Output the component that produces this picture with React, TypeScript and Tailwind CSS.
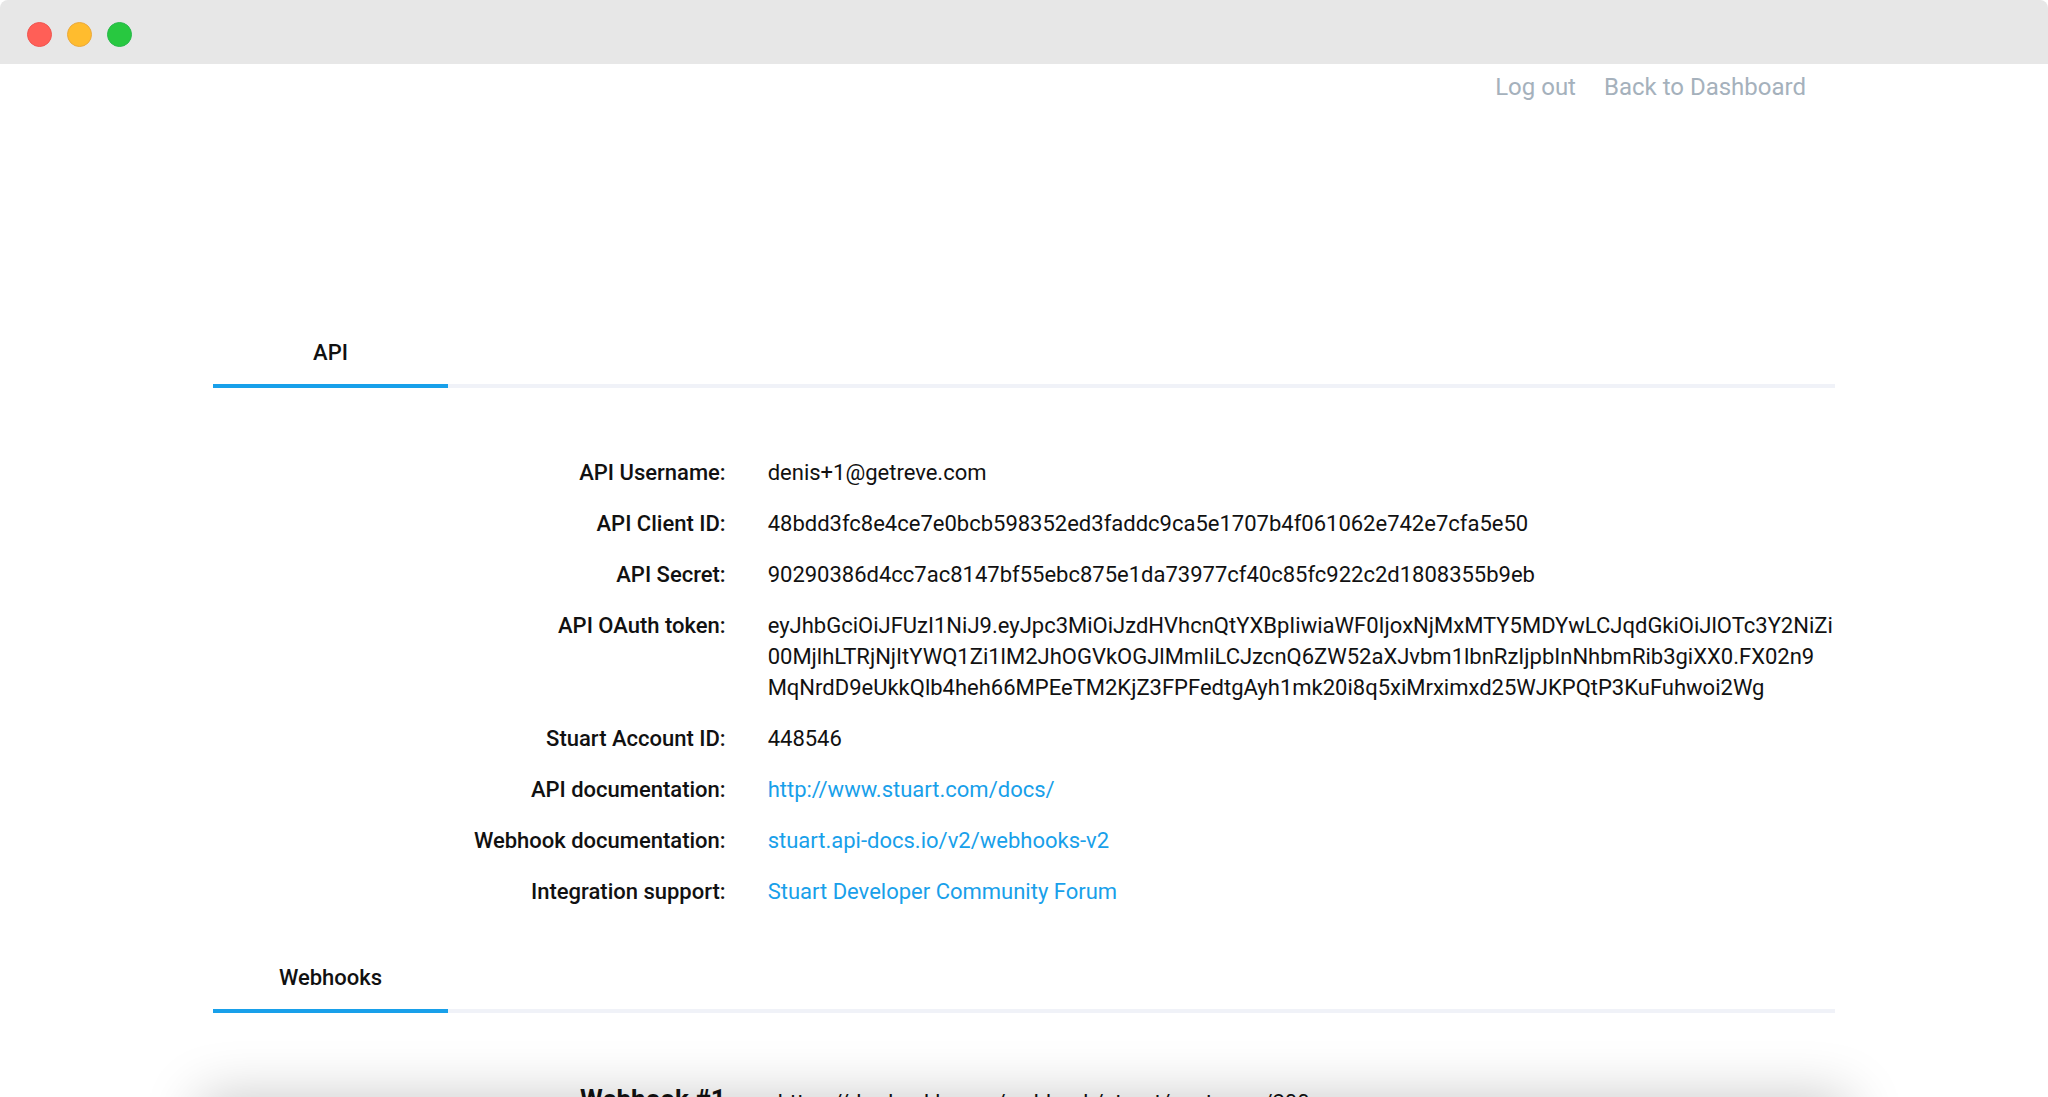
const details = [
  { label: "API Username:", lines: ["denis+1@getreve.com"] },
  { label: "API Client ID:", lines: ["48bdd3fc8e4ce7e0bcb598352ed3faddc9ca5e1707b4f061062e742e7cfa5e50"] },
  { label: "API Secret:", lines: ["90290386d4cc7ac8147bf55ebc875e1da73977cf40c85fc922c2d1808355b9eb"] },
  {
    label: "API OAuth token:",
    lines: [
      "eyJhbGciOiJFUzI1NiJ9.eyJpc3MiOiJzdHVhcnQtYXBpIiwiaWF0IjoxNjMxMTY5MDYwLCJqdGkiOiJlOTc3Y2NiZi",
      "00MjlhLTRjNjItYWQ1Zi1lM2JhOGVkOGJlMmIiLCJzcnQ6ZW52aXJvbm1lbnRzIjpbInNhbmRib3giXX0.FX02n9",
      "MqNrdD9eUkkQlb4heh66MPEeTM2KjZ3FPFedtgAyh1mk20i8q5xiMrximxd25WJKPQtP3KuFuhwoi2Wg",
    ],
  },
  { label: "Stuart Account ID:", lines: ["448546"] },
  { label: "API documentation:", lines: ["http://www.stuart.com/docs/"], href: "http://www.stuart.com/docs/" },
  { label: "Webhook documentation:", lines: ["stuart.api-docs.io/v2/webhooks-v2"], href: "https://stuart.api-docs.io/v2/webhooks-v2" },
  { label: "Integration support:", lines: ["Stuart Developer Community Forum"], href: "#forum" },
];

function SectionTab({ title }: { title: string }) {
  return (
    <div className="flex border-b-4 border-[#f0f2f8]">
      <h2 className="-mb-1 h-[59px] w-[235px] border-b-4 border-[#18a0ea] text-center leading-[48px] font-medium">
        {title}
      </h2>
    </div>
  );
}

export default function App() {
  return (
    <div className="relative h-screen overflow-hidden rounded-lg bg-white font-['Roboto',sans-serif] text-[22px] leading-[31px] text-[#111]">
      <header className="flex h-16 items-center gap-[15px] bg-[#e7e7e7] px-[27px] pt-1">
        <button aria-label="Close" className="size-[25px] rounded-full border border-[#f05550] bg-[#ff5f57]" />
        <button aria-label="Minimize" className="size-[25px] rounded-full border border-[#eba93c] bg-[#ffbc2e]" />
        <button aria-label="Zoom" className="size-[25px] rounded-full border border-[#28b84c] bg-[#28c840]" />
      </header>

      <div className="mx-auto max-w-[1622px]">
        <nav className="flex justify-end gap-7 pt-2 pr-[29px] text-2xl leading-[31px] text-[#a5b1bc]">
          <a href="#logout">Log out</a>
          <a href="#dashboard">Back to Dashboard</a>
        </nav>

        <main className="pt-[226px]">
          <SectionTab title="API" />
          <dl className="flex flex-col gap-5 pt-[69px] pb-[47px]">
            {details.map((item) => (
              <div key={item.label} className="flex">
                <dt className="w-1/3 shrink-0 pr-7 text-right font-medium">{item.label}</dt>
                <dd className="pl-[14px] whitespace-nowrap">
                  {item.lines.map((line) =>
                    item.href ? (
                      <a key={line} href={item.href} className="text-[#18a0ea]">
                        {line}
                      </a>
                    ) : (
                      <span key={line} className="block">
                        {line}
                      </span>
                    )
                  )}
                </dd>
              </div>
            ))}
          </dl>

          <SectionTab title="Webhooks" />
          <dl className="flex pt-[70px]">
            <dt className="w-1/3 shrink-0 pr-7 text-right text-[26px] leading-8 font-bold">Webhook #1</dt>
            <dd className="pt-1 pl-6 whitespace-nowrap">https://dev.backh.com/webhook/stuart/customer/200</dd>
          </dl>
        </main>
      </div>

      {/* fade along the bottom edge */}
      <div className="pointer-events-none absolute inset-x-[200px] top-full h-40 shadow-[0_0_56px_rgba(0,0,0,0.22)]" />
    </div>
  );
}
